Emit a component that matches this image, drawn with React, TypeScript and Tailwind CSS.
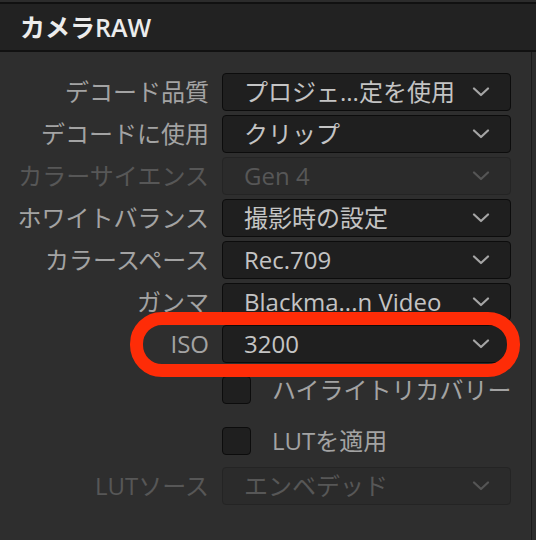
import React from 'react';

type Row =
  | { kind: 'select'; label: string; value: string; disabled?: boolean }
  | { kind: 'check'; label: string };

const rows: Row[] = [
  { kind: 'select', label: 'デコード品質', value: 'プロジェ...定を使用' },
  { kind: 'select', label: 'デコードに使用', value: 'クリップ' },
  { kind: 'select', label: 'カラーサイエンス', value: 'Gen 4', disabled: true },
  { kind: 'select', label: 'ホワイトバランス', value: '撮影時の設定' },
  { kind: 'select', label: 'カラースペース', value: 'Rec.709' },
  { kind: 'select', label: 'ガンマ', value: 'Blackma...n Video' },
  { kind: 'select', label: 'ISO', value: '3200' },
];

const Chevron = ({ dim }: { dim?: boolean }) => (
  <svg width="18" height="10" viewBox="0 0 18 10" className={dim ? 'text-[#555]' : 'text-[#a5a5a5]'}>
    <path d="M2 1.5 L9 8 L16 1.5" fill="none" stroke="currentColor" strokeWidth="2.2" strokeLinecap="round" strokeLinejoin="round" />
  </svg>
);

const Select = ({ value, disabled }: { value: string; disabled?: boolean }) => (
  <div
    className={`flex h-[38px] w-[289px] items-center justify-between rounded-[4px] border pl-[21px] pr-[20px] ${
      disabled ? 'border-[#242424] bg-[#2b2b2b] text-[#575757]' : 'border-[#0c0c0c] bg-[#1f1f1f] text-[#c4c4c4]'
    }`}
  >
    <span className="whitespace-nowrap">{value}</span>
    <Chevron dim={disabled} />
  </div>
);

const Label = ({ text, disabled }: { text: string; disabled?: boolean }) => (
  <div className={`w-[209px] whitespace-nowrap text-right ${disabled ? 'text-[#575757]' : 'text-[#a3a3a3]'}`}>{text}</div>
);

const Checkbox = ({ label }: { label: string }) => (
  <div className="flex items-center">
    <div className="ml-[222px] h-[28px] w-[29px] rounded-[4px] border border-[#0c0c0c] bg-[#1f1f1f]" />
    <span className="ml-[21px] whitespace-nowrap text-[#a3a3a3]">{label}</span>
  </div>
);

export default function App() {
  return (
    <div
      className="relative h-[540px] w-[536px] overflow-hidden bg-[#2c2c2c] text-[24px] leading-none"
      style={{ fontFamily: '"Open Sans", "Noto Sans CJK JP", sans-serif' }}
    >
      {/* Header */}
      <div className="mt-[2px] flex h-[50px] items-center border-y-2 border-[#111] bg-[#222] pl-[20px]">
        <span className="text-[25px] font-semibold text-[#ececec]">カメラRAW</span>
      </div>

      <div className="flex h-[488px]">
        <div className="w-[532px] border-r border-[#1a1a1a] bg-[#2e2e2e] pt-[21px]">
          <div className="flex flex-col gap-[4px]">
            {rows.map((r) =>
              r.kind === 'select' ? (
                <div key={r.label} className="flex items-center gap-[13px]">
                  <Label text={r.label} disabled={r.disabled} />
                  <Select value={r.value} disabled={r.disabled} />
                </div>
              ) : null
            )}
          </div>

          <div className="mt-[13px] flex flex-col gap-[23px]">
            <Checkbox label="ハイライトリカバリー" />
            <Checkbox label="LUTを適用" />
          </div>

          <div className="mt-[12px] flex items-center gap-[13px]">
            <Label text="LUTソース" disabled />
            <Select value="エンベデッド" disabled />
          </div>
        </div>
      </div>

      {/* Highlight ring around ISO */}
      <div className="absolute left-[130px] top-[312px] h-[65px] w-[390px] rounded-[32px] border-[13px] border-[#fe2c07]" />
    </div>
  );
}
